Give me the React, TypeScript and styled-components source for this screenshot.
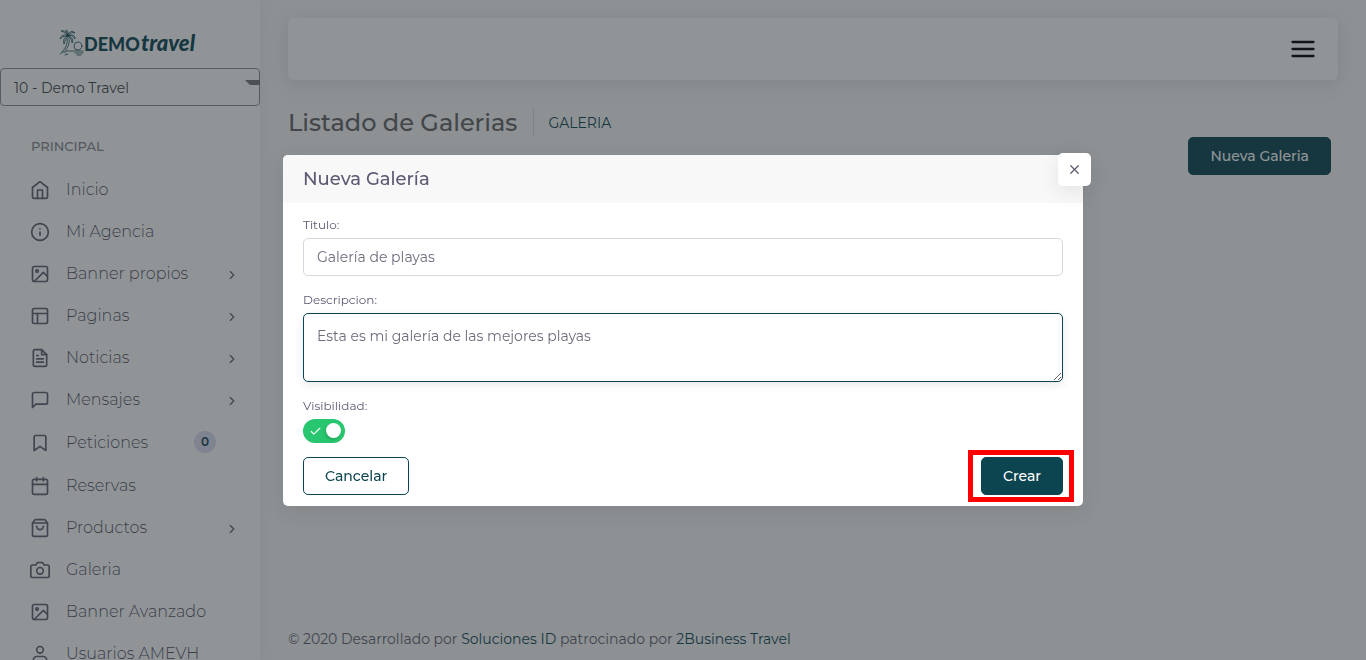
import React from "react";
import styled, { createGlobalStyle, css } from "styled-components";
import type { IconType } from "react-icons";
import {
  FiBookmark,
  FiCalendar,
  FiCamera,
  FiCheck,
  FiChevronRight,
  FiFileText,
  FiHome,
  FiImage,
  FiInfo,
  FiLayout,
  FiMenu,
  FiMessageSquare,
  FiShoppingBag,
  FiUser,
  FiX,
} from "react-icons/fi";

const color = {
  primary: "#0c4550",
  text: "#625f6e",
  heading: "#5e5873",
  input: "#6e6b7b",
  border: "#d8d6de",
  success: "#28c76f",
};

const GlobalStyle = createGlobalStyle`
  *, *::before, *::after { box-sizing: border-box; }
  body {
    margin: 0;
    background: #f8f8f8;
    color: ${color.text};
    font-family: Montserrat, Inter, "Open Sans", sans-serif;
    font-size: 14px;
    font-weight: 400;
    line-height: 22px;
  }
  button, input, textarea, select { font: inherit; }
  a { color: inherit; text-decoration: none; }
`;

const Page = styled.div`
  display: flex;
  height: 100vh;
  overflow: hidden;
`;

/* Sidebar */

const Sidebar = styled.aside`
  flex: 0 0 260px;
  background: #fff;
  box-shadow: 0 0 15px rgba(34, 41, 47, 0.05);
  overflow: hidden;
`;

const Brand = styled.a`
  display: flex;
  justify-content: center;
  padding: 28px 6px 0 0;
  height: 68px;
`;

const AgencyPicker = styled.div`
  position: relative;
  overflow: hidden;
`;

const AgencySelect = styled.select`
  display: block;
  width: 100%;
  height: 38px;
  padding: 1px 13px 0;
  appearance: none;
  border: 1px solid #8f8f8f;
  border-radius: 4px;
  background: transparent;
  color: #444;
`;

const PickerArrow = styled.svg`
  position: absolute;
  top: 12px;
  right: 0;
  pointer-events: none;
`;

const MenuHeading = styled.h2`
  margin: 30px 0 12px 31px;
  color: #8a8791;
  font-size: 13px;
  font-weight: 500;
  line-height: 20px;
`;

const MenuList = styled.ul`
  margin: 0;
  padding: 0;
  list-style: none;
`;

const MenuLink = styled.a`
  display: flex;
  align-items: center;
  padding: 10px 21px 10px 30px;
  font-size: 16px;
  font-weight: 300;
`;

const MenuIcon = styled.span`
  display: flex;
  margin-right: 16px;
  padding-top: 2px;
`;

const MenuLabel = styled.span`
  flex: 1;
  padding-top: 2px;
  color: #55525f;
  line-height: 20px;
  white-space: nowrap;
`;

const MenuChevron = styled(FiChevronRight)`
  margin-top: 3px;
`;

const Badge = styled.span`
  margin: 1px 23px 1px 0;
  padding: 0 7px;
  border-radius: 11px;
  background: #dedcf0;
  color: ${color.primary};
  font-size: 12px;
  font-weight: 600;
`;

/* Content */

const Content = styled.main`
  flex: 1;
  display: flex;
  flex-direction: column;
  padding: 18px 28px 10px;
`;

const Navbar = styled.nav`
  display: flex;
  align-items: center;
  justify-content: flex-end;
  height: 62px;
  padding: 0 21px;
  border-radius: 6px;
  background: #fff;
  box-shadow: 0 4px 20px rgba(0, 0, 0, 0.1);
`;

const IconButton = styled.button`
  display: flex;
  padding: 0;
  border: 0;
  background: none;
  color: #000;
`;

const PageHeader = styled.header`
  display: flex;
  align-items: flex-start;
  justify-content: space-between;
  padding: 29px 7px 0 0;
`;

const Breadcrumb = styled.div`
  display: flex;
  align-items: center;
`;

const PageTitle = styled.h1`
  margin: 0;
  padding-right: 16px;
  border-right: 1px solid #d6dce1;
  color: #636363;
  font-size: 24px;
  font-weight: 500;
  line-height: 28px;
`;

const Crumb = styled.a`
  margin-left: 14px;
  color: ${color.primary};
`;

const Button = styled.button<{ $outline?: boolean; $offset?: boolean }>`
  height: 38px;
  padding: 0 21px;
  border: 1px solid ${color.primary};
  border-radius: 5px;
  background: ${color.primary};
  color: #fff;
  font-weight: 500;
  ${({ $outline }) =>
    $outline &&
    css`
      background: #fff;
      color: ${color.primary};
    `}
  ${({ $offset }) =>
    $offset &&
    css`
      margin-top: 28px;
    `}
`;

const Footer = styled.footer`
  margin-top: auto;
  a { color: ${color.primary}; }
`;

/* Dialog */

const Backdrop = styled.div`
  position: fixed;
  inset: 0;
  display: flex;
  align-items: center;
  justify-content: center;
  padding-top: 1px;
  background: rgba(34, 41, 47, 0.5);
`;

const Dialog = styled.section`
  position: relative;
  width: 100%;
  max-width: 800px;
  border-radius: 5px;
  background: #fff;
  box-shadow: 0 5px 20px rgba(34, 41, 47, 0.1);
`;

const DialogHeader = styled.header`
  padding: 12px 20px;
  border-radius: 5px 5px 0 0;
  background: #f8f8f8;
`;

const DialogTitle = styled.h2`
  margin: 0;
  color: ${color.heading};
  font-size: 18px;
  font-weight: 500;
  line-height: 24px;
`;

const CloseButton = styled.button`
  position: absolute;
  top: -2px;
  right: -8px;
  display: flex;
  align-items: center;
  justify-content: center;
  width: 33px;
  height: 33px;
  padding: 0;
  border: 0;
  border-radius: 5px;
  background: #fff;
  color: ${color.heading};
  box-shadow: 0 5px 20px rgba(34, 41, 47, 0.1);
`;

const Form = styled.form`
  padding: 11px 20px;
`;

const Field = styled.div`
  margin-bottom: 13px;
`;

const Label = styled.label`
  display: block;
  margin-bottom: 2px;
  color: ${color.heading};
  font-size: 12px;
  line-height: 22px;
`;

const controlStyle = css`
  display: block;
  width: 100%;
  border: 1px solid ${color.border};
  border-radius: 5px;
  outline: 0;
  background: #fff;
  color: ${color.input};
`;

const TextInput = styled.input`
  ${controlStyle}
  height: 38px;
  padding: 0 13px;
`;

const TextArea = styled.textarea`
  ${controlStyle}
  height: 69px;
  padding: 11px 13px;
  border-color: ${color.primary};
  box-shadow: 0 3px 10px rgba(34, 41, 47, 0.1);
  resize: vertical;
`;

const Switch = styled.span`
  position: relative;
  display: block;
  width: 42px;
  height: 24px;
  color: #fff;
`;

const SwitchInput = styled.input`
  display: block;
  width: 42px;
  height: 24px;
  margin: 0;
  appearance: none;
  border-radius: 12px;
  background: ${color.border};
  &:checked { background: ${color.success}; }
  &::after {
    content: "";
    position: absolute;
    top: 4px;
    right: 4px;
    width: 15px;
    height: 15px;
    border-radius: 50%;
    background: #fff;
    box-shadow: -1px 2px 3px rgba(34, 41, 47, 0.2);
  }
`;

const SwitchCheck = styled(FiCheck)`
  position: absolute;
  top: 6px;
  left: 6px;
  pointer-events: none;
`;

const Actions = styled.div`
  display: flex;
  justify-content: space-between;
  padding-top: 1px;
`;

const Highlighted = styled.div`
  position: relative;
  &::after {
    content: "";
    position: absolute;
    inset: -7px -11px -7px -13px;
    border: 5px solid #f00;
    pointer-events: none;
  }
`;

interface MenuEntry {
  label: string;
  icon: IconType;
  expandable?: boolean;
  count?: number;
}

const menu: MenuEntry[] = [
  { label: "Inicio", icon: FiHome },
  { label: "Mi Agencia", icon: FiInfo },
  { label: "Banner propios", icon: FiImage, expandable: true },
  { label: "Paginas", icon: FiLayout, expandable: true },
  { label: "Noticias", icon: FiFileText, expandable: true },
  { label: "Mensajes", icon: FiMessageSquare, expandable: true },
  { label: "Peticiones", icon: FiBookmark, count: 0 },
  { label: "Reservas", icon: FiCalendar },
  { label: "Productos", icon: FiShoppingBag, expandable: true },
  { label: "Galeria", icon: FiCamera },
  { label: "Banner Avanzado", icon: FiImage },
  { label: "Usuarios AMEVH", icon: FiUser },
];

function Logo() {
  return (
    <svg width="138" height="30" viewBox="0 0 138 30" role="img" aria-label="Demo Travel">
      <g fill="none" stroke={color.primary} strokeWidth="0.8" strokeLinecap="round" strokeLinejoin="round">
        <path d="M10 8C9 4 6 2 3 3c3 1 5 2 7 5C7 6 3 7 2 11c3-3 5-3 8-3-4 1-5 4-4 8 1-4 2-5 4-8 3 2 4 4 4 7 2-3 0-6-4-7 4-1 5 0 7 3 0-4-3-5-7-3 2-3 4-4 7-3-2-3-6-2-7 3 0-4 0-5-2-6 1 2 1 3 2 6z" />
        <path d="M9 10c1 5-1 10-5 14M11 10c1 6-1 9-4 13" />
        <path d="M2 26c2-2 4-3 6-1M7 27l3-1M8 23h17M17 25h8M19 27h4" />
        <circle cx="20" cy="18" r="4" />
      </g>
      <text x="26" y="23" fill={color.primary} fontFamily="Lato, sans-serif" fontSize="18" fontWeight="900">
        DEMO
      </text>
      <text x="83" y="23" fill={color.primary} fontFamily="Lato, sans-serif" fontSize="22" fontStyle="italic" fontWeight="900">
        travel
      </text>
    </svg>
  );
}

export default function App() {
  return (
    <>
      <GlobalStyle />
      <Page>
        <Sidebar>
          <Brand href="#">
            <Logo />
          </Brand>
          <AgencyPicker>
            <AgencySelect aria-label="Agencia" defaultValue="10">
              <option value="10">10 - Demo Travel</option>
            </AgencySelect>
            <PickerArrow width="15" height="5" viewBox="0 0 15 5">
              <path d="M0 0h15v5H5z" fill="#75787a" />
            </PickerArrow>
          </AgencyPicker>
          <MenuHeading>PRINCIPAL</MenuHeading>
          <MenuList>
            {menu.map(({ label, icon: Icon, expandable, count }) => (
              <li key={label}>
                <MenuLink href="#">
                  <MenuIcon>
                    <Icon size={20} />
                  </MenuIcon>
                  <MenuLabel>{label}</MenuLabel>
                  {expandable && <MenuChevron size={14} />}
                  {count !== undefined && <Badge>{count}</Badge>}
                </MenuLink>
              </li>
            ))}
          </MenuList>
        </Sidebar>

        <Content>
          <Navbar>
            <IconButton type="button" aria-label="Menu">
              <FiMenu size={28} />
            </IconButton>
          </Navbar>
          <PageHeader>
            <Breadcrumb>
              <PageTitle>Listado de Galerias</PageTitle>
              <Crumb href="#">GALERIA</Crumb>
            </Breadcrumb>
            <Button type="button" $offset>
              Nueva Galeria
            </Button>
          </PageHeader>
          <Footer>
            © 2020 Desarrollado por <a href="#">Soluciones ID</a> patrocinado por <a href="#">2Business Travel</a>
          </Footer>
        </Content>
      </Page>

      <Backdrop>
        <Dialog role="dialog" aria-modal="true" aria-labelledby="dialog-title">
          <DialogHeader>
            <DialogTitle id="dialog-title">Nueva Galería</DialogTitle>
          </DialogHeader>
          <CloseButton type="button" aria-label="Cerrar">
            <FiX size={15} />
          </CloseButton>
          <Form>
            <Field>
              <Label htmlFor="titulo">Titulo:</Label>
              <TextInput id="titulo" type="text" defaultValue="Galería de playas" />
            </Field>
            <Field>
              <Label htmlFor="descripcion">Descripcion:</Label>
              <TextArea id="descripcion" defaultValue="Esta es mi galería de las mejores playas" />
            </Field>
            <Field>
              <Label htmlFor="visibilidad">Visibilidad:</Label>
              <Switch>
                <SwitchInput id="visibilidad" type="checkbox" defaultChecked />
                <SwitchCheck size={13} />
              </Switch>
            </Field>
            <Actions>
              <Button type="button" $outline>
                Cancelar
              </Button>
              <Highlighted>
                <Button type="button">Crear</Button>
              </Highlighted>
            </Actions>
          </Form>
        </Dialog>
      </Backdrop>
    </>
  );
}
